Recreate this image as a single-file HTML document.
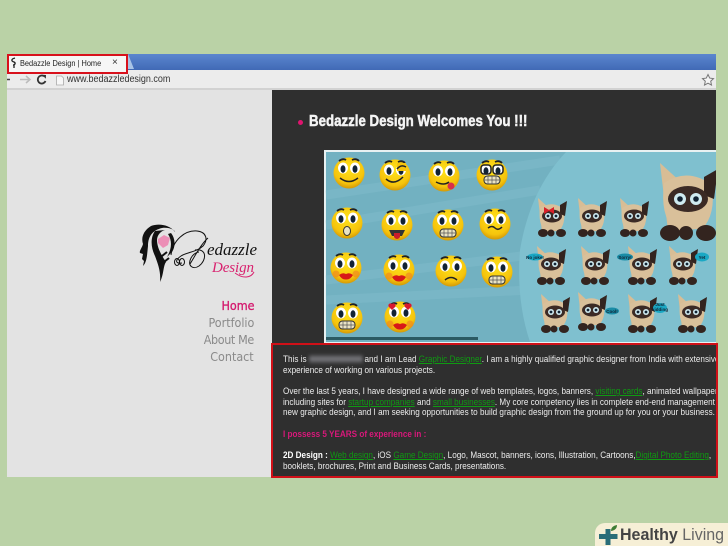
<!DOCTYPE html>
<html><head><meta charset="utf-8">
<style>
html,body{margin:0;padding:0}
body{width:728px;height:546px;overflow:hidden;background:#bad2a6;position:relative;font-family:"Liberation Sans",sans-serif}
.a{position:absolute}
.t{position:absolute;left:283px;white-space:nowrap;font-size:9px;line-height:11px;color:#ececec;transform-origin:0 0;transform:scaleX(.905)}
.t a{color:#0f9a12;text-decoration:underline}
.m{position:absolute;right:474px;font-family:"DejaVu Sans",sans-serif;font-size:12px;line-height:14px;color:#8a8a8a;transform-origin:100% 0;transform:scaleX(.93)}
</style></head><body>
<div class="a" style="left:7px;top:54px;width:709px;height:17px;background:linear-gradient(#5b86cf,#3f68b4)"></div>
<div class="a" style="left:7px;top:70px;width:709px;height:20px;background:#ececec;border-bottom:2px solid #d2d2d2;box-sizing:border-box"></div>
<svg class="a" style="left:124px;top:54px" width="14" height="17"><path d="M0 0h4l6 15H0z" fill="#a9c4e6"/></svg>
<div class="a" style="left:8px;top:55px;width:118px;height:18px;background:#f6f6f6"></div>
<div class="a" style="left:7px;top:54px;width:121px;height:20px;border:2px solid #d8111c;box-sizing:border-box"></div>
<svg class="a" style="left:9px;top:57px" width="10" height="12"><path d="M6 1C2 2 2 4 5 5 7 6 6 8 4 8M5 8v3" fill="none" stroke="#222" stroke-width="1.300"/></svg>
<div class="a" style="left:19.500px;top:57px;font-size:8.600px;line-height:12px;color:#222;white-space:nowrap;transform-origin:0 0;transform:scaleX(.86)">Bedazzle Design | Home</div>
<div class="a" style="left:112px;top:56px;font-size:10px;line-height:13px;color:#333">×</div>
<svg class="a" style="left:7px;top:73px" width="60" height="14"><path d="M0 6.500h3" stroke="#444" stroke-width="1.500"/><path d="M13 6.500h9M19 3l4 3.500-4 3.500" fill="none" stroke="#bbb" stroke-width="1.500"/><path d="M37 3.200A4 4 0 1 0 38.500 8" fill="none" stroke="#333" stroke-width="1.800"/><path d="M35 1.800l4 .2-.2 3.800z" fill="#333"/><path d="M49.500 3h5l2 2v7h-7z" fill="#f7f7f7" stroke="#aaa" stroke-width=".8"/></svg>
<div class="a" style="left:66.500px;top:73px;font-size:9.900px;line-height:13px;color:#333;white-space:nowrap;transform-origin:0 0;transform:scaleX(.91)">www.bedazzledesign.com</div>
<svg class="a" style="left:701px;top:73px" width="14" height="14"><path d="M7 1.500l1.700 3.600 3.800.5-2.800 2.600.8 3.900L7 10.200 3.500 12.100l.8-3.900L1.500 5.600l3.800-.5z" fill="#f5f5f5" stroke="#777" stroke-width="1"/></svg>

<div class="a" style="left:7px;top:90px;width:265px;height:387px;background:#e3e3e3"></div>
<div class="a" style="left:272px;top:90px;width:444px;height:387px;background:#2f2f2f"></div>

<!-- logo -->
<svg class="a" style="left:135px;top:222px" width="125" height="68" viewBox="0 0 125 68">
<path d="M16 4C8 9 6 16 8 22 7 26 4 29 5 31L8 32 7 37 9 39 8 44C12 40 12 33 13 24 13 14 18 8 27 6 34 5 40 8 40 10 35 3 24 1 16 4Z" fill="#111"/>
<path d="M20 9C15 16 16 26 20 34 23 42 26 50 25 60 29 52 28 44 31 40 27 34 22 26 22 18 22 13 26 9 30 8Z" fill="#111"/>
<path d="M36 11C40 16 41 24 37 30L32 35C36 28 38 20 33 12Z" fill="#111"/>
<path d="M24 44L34 36M22 38L32 30" stroke="#111" stroke-width="2"/>
<path d="M23 17L29 13 35 16 33 23 28 26 23 21Z" fill="#ec8fb6"/>
<path d="M36 33C38 18 50 8 62 9 72 10 73 18 68 24 62 30 52 30 46 34 40 38 40 42 47 41M55 42C60 34 66 22 73 16M60 28C72 26 72 38 64 44 58 48 52 44 56 36 58 32 62 30 64 30" fill="none" stroke="#111" stroke-width="1"/>
<ellipse cx="42" cy="40" rx="2.500" ry="3.500" fill="none" stroke="#111"/><ellipse cx="47" cy="40" rx="2.500" ry="3.500" fill="none" stroke="#111"/>
<text x="72" y="33" font-family="Liberation Serif,serif" font-style="italic" font-size="17" fill="#111" textLength="50">edazzle</text>
<text x="77" y="50" font-family="Liberation Serif,serif" font-style="italic" font-size="15" fill="#d9226f" textLength="42">Design</text>
<path d="M100 51c8 6 16 5 19-1" fill="none" stroke="#d9226f"/>
</svg>

<div class="m" style="top:299px;color:#d41a6e;-webkit-text-stroke:.35px #d41a6e">Home</div>
<div class="m" style="top:316px">Portfolio</div>
<div class="m" style="top:333px;letter-spacing:-.4px">About Me</div>
<div class="m" style="top:350px">Contact</div>

<!-- heading -->
<div class="a" style="left:298px;top:120px;width:5px;height:5px;border-radius:50%;background:#e0146f"></div>
<div class="a" style="left:309px;top:113px;font:bold 16px/18px 'Liberation Sans',sans-serif;color:#f4f4f4;white-space:nowrap;transform-origin:0 0;transform:scaleX(.83);-webkit-text-stroke:.5px #f4f4f4">Bedazzle Design Welcomes You !!!</div>

<!-- image -->
<svg class="a" style="left:324px;top:150px" width="392" height="193" viewBox="324 150 392 193">
<defs>
<radialGradient id="y" cx=".5" cy=".35" r=".7"><stop offset="0" stop-color="#ffe21a"/><stop offset=".7" stop-color="#f6c40c"/><stop offset="1" stop-color="#c98c06"/></radialGradient>
<g id="e"><circle r="15.500" fill="url(#y)"/>
<path d="M-10-12q4-3 7-1M3-13q4-2 7 1" fill="none" stroke="#222" stroke-width="1.800"/>
<ellipse cx="-6" cy="-5" rx="5" ry="5.500" fill="#fff"/><ellipse cx="6" cy="-5" rx="5" ry="5.500" fill="#fff"/>
<ellipse cx="-6" cy="-4" rx="2.500" ry="3.800" fill="#123"/><ellipse cx="6" cy="-4" rx="2.500" ry="3.800" fill="#123"/></g>
<g id="t"><rect x="-8" y="4" width="16" height="8" rx="3.500" fill="#e9e3c4" stroke="#333"/><path d="M-4 4v8M0 4v8M4 4v8M-8 8h16" stroke="#555" stroke-width=".7"/></g>
<g id="k"><path d="M-7 7q3.500-3 7-1 3.500-2 7 1-3 5-7 4.500Q-4 12-7 7z" fill="#d81818"/><circle cx="-10" cy="6" r="3.500" fill="#f08a20" opacity=".7"/><circle cx="10" cy="6" r="3.500" fill="#f08a20" opacity=".7"/></g>
<g id="c"><path d="M-14-24l11 10 8-1 0 24-15 1z" fill="#d8bd95"/><path d="M-12-14Q0-22 12-13 14 2 7 9H-7Q-14 2-12-14z" fill="#d9c09a"/>
<path d="M8-17L15-21 13-6 8-8z" fill="#33241f"/>
<ellipse cx="0" cy="-6" rx="10" ry="6.500" fill="#3b2a25"/><circle cx="-4" cy="-6" r="3" fill="#cfeaf0"/><circle cx="4" cy="-6" r="3" fill="#cfeaf0"/><circle cx="-4" cy="-6" r="1.400" fill="#123"/><circle cx="4" cy="-6" r="1.400" fill="#123"/>
<ellipse cx="-9" cy="11" rx="5" ry="4" fill="#33241f"/><ellipse cx="9" cy="11" rx="5" ry="4" fill="#33241f"/><ellipse cx="-1" cy="11" rx="3.500" ry="3.500" fill="#33241f"/></g>
</defs>
<rect x="324" y="150" width="392" height="193" fill="#e8f1f2"/>
<rect x="326" y="152" width="390" height="190" fill="#72b1c1"/>
<path d="M326 195L560 160M326 225L540 190M326 280L530 255M326 300L530 290" stroke="#8cc6d3" stroke-width="9" opacity=".28"/>
<path d="M566 152H716V342H530Q516 300 520 250 530 190 566 152z" fill="#7fc0cf"/>
<rect x="326" y="337" width="152" height="3" fill="#2b5a63"/>
<use href="#e" x="349" y="173"/><use href="#e" x="395" y="175"/><use href="#e" x="444" y="176"/><use href="#e" x="492" y="175"/>
<use href="#e" x="347" y="223"/><use href="#e" x="397" y="225"/><use href="#e" x="448" y="225"/><use href="#e" x="495" y="224"/>
<use href="#e" x="346" y="268"/><use href="#e" x="399" y="270"/><use href="#e" x="451" y="271"/><use href="#e" x="497" y="272"/>
<use href="#e" x="347" y="318"/><use href="#e" x="400" y="317"/>
<path d="M340 178q9 7 18 0" fill="none" stroke="#222" stroke-width="1.500"/>
<path d="M386 179q8 7 17-2" fill="none" stroke="#222" stroke-width="1.500"/><path d="M397 167h9" stroke="#f6c40c" stroke-width="8"/><path d="M397 169q4-5 9-2" fill="none" stroke="#222" stroke-width="1.500"/>
<path d="M436 182q8 4 13 0" fill="none" stroke="#222" stroke-width="1.500"/><circle cx="451" cy="186" r="3.500" fill="#d8304a"/>
<rect x="481" y="165" width="10" height="9" rx="3" fill="none" stroke="#222" stroke-width="1.500"/><rect x="493" y="165" width="10" height="9" rx="3" fill="none" stroke="#222" stroke-width="1.500"/><use href="#t" x="492" y="172"/>
<ellipse cx="347" cy="231" rx="3.500" ry="4.500" fill="#e9e3c4" stroke="#333"/>
<path d="M389 230h16l-3 6h-10z" fill="#333"/><path d="M394 233h6v4q-3 4-6 0z" fill="#c81d2a"/>
<use href="#t" x="448" y="225"/><path d="M488 228q4-3 7 0t7-1" fill="none" stroke="#222" stroke-width="1.500"/>
<use href="#k" x="346" y="268"/><use href="#k" x="399" y="270"/>
<path d="M445 280q6-5 12 0" fill="none" stroke="#222" stroke-width="1.500"/><use href="#t" x="497" y="272"/>
<use href="#t" x="347" y="317"/><use href="#k" x="400" y="318"/>
<path d="M392 310l-3-3a2 2 0 0 1 3-3 2 2 0 0 1 3 3zM408 310l-3-3a2 2 0 0 1 3-3 2 2 0 0 1 3 3z" fill="#d81830"/>
<use href="#c" x="552" y="222"/><use href="#c" x="592" y="222"/><use href="#c" x="634" y="222"/>
<use href="#c" transform="translate(688 211) scale(2)"/>
<use href="#c" x="551" y="270"/><use href="#c" x="595" y="270"/><use href="#c" x="642" y="270"/><use href="#c" x="683" y="270"/>
<use href="#c" x="555" y="318"/><use href="#c" x="592" y="316"/><use href="#c" x="642" y="318"/><use href="#c" x="692" y="318"/>
<path d="M544 207l5 3 5-3v7l-5-3-5 3z" fill="#d8202a"/>
<ellipse cx="535" cy="257" rx="8" ry="3.500" fill="#1aa8c4"/><ellipse cx="625" cy="257" rx="8" ry="3.500" fill="#1a8ca6"/><ellipse cx="702" cy="257" rx="7" ry="4.500" fill="#1aa8c4"/><ellipse cx="612" cy="311" rx="7" ry="3.500" fill="#1a8ca6"/><ellipse cx="660" cy="308" rx="7" ry="5" fill="#1aa8c4"/>
<text x="535" y="259" font-size="4.500" font-weight="bold" text-anchor="middle" fill="#123">No joke!</text>
<text x="625" y="259" font-size="4.500" font-weight="bold" text-anchor="middle" fill="#123">Sorry!</text>
<text x="702" y="259" font-size="4.500" font-weight="bold" text-anchor="middle" fill="#123">Yet</text>
<text x="612" y="313" font-size="4.500" font-weight="bold" text-anchor="middle" fill="#123">Cool!</text>
<text x="660" y="306" font-size="4.500" font-weight="bold" text-anchor="middle" fill="#123">Just</text>
<text x="660" y="311" font-size="4.500" font-weight="bold" text-anchor="middle" fill="#123">kidding</text>
</svg>

<!-- text box -->
<div class="a" style="left:272px;top:343px;width:444px;height:134px;overflow:hidden">
<div style="position:absolute;left:-272px;top:-343px;width:728px;height:546px">
<div class="t" style="top:354px">This is <span style="display:inline-block;width:59px;height:6px;background:#77777c;filter:blur(2px)"></span> and I am Lead <a>Graphic Designer</a>. I am a highly qualified graphic designer from India with extensive</div>
<div class="t" style="top:365px">experience of working on various projects.</div>
<div class="t" style="top:386px">Over the last 5 years, I have designed a wide range of web templates, logos, banners, <a>visiting cards</a>, animated wallpapers,</div>
<div class="t" style="top:397px">including sites for <a>startup companies</a> and <a>small businesses</a>. My core competency lies in complete end-end management of</div>
<div class="t" style="top:407px">new graphic design, and I am seeking opportunities to build graphic design from the ground up for you or your business.</div>
<div class="t" style="top:429px;color:#d8187a;font-weight:bold">I possess 5 YEARS of experience in :</div>
<div class="t" style="top:450px"><b style="color:#fff">2D Design :</b> <a>Web design</a>, iOS <a>Game Design</a>, Logo, Mascot, banners, icons, Illustration, Cartoons,<a>Digital Photo Editing</a>,</div>
<div class="t" style="top:461px">booklets, brochures, Print and Business Cards, presentations.</div>
</div></div>
<div class="a" style="left:271px;top:343px;width:447px;height:135px;border:2px solid #d01018;box-sizing:border-box"></div>

<!-- badge -->
<div class="a" style="left:595px;top:523px;width:133px;height:23px;background:#f6efd6;border-top-left-radius:10px"></div>
<svg class="a" style="left:598px;top:524px" width="24" height="22"><path d="M7.500 5h5v5h7v5h-7v6h-5v-6H1v-5h6.500z" fill="#2a6d78"/><path d="M13 7q0-5 6-6 0 5-6 6z" fill="#3f7d35"/></svg>
<div class="a" style="left:620px;top:525px;font:bold 16.500px/20px 'Liberation Sans',sans-serif;color:#444;white-space:nowrap;transform-origin:0 0;transform:scaleX(.97)">Healthy <span style="font-weight:normal;color:#666">Living</span></div>
</body></html>
